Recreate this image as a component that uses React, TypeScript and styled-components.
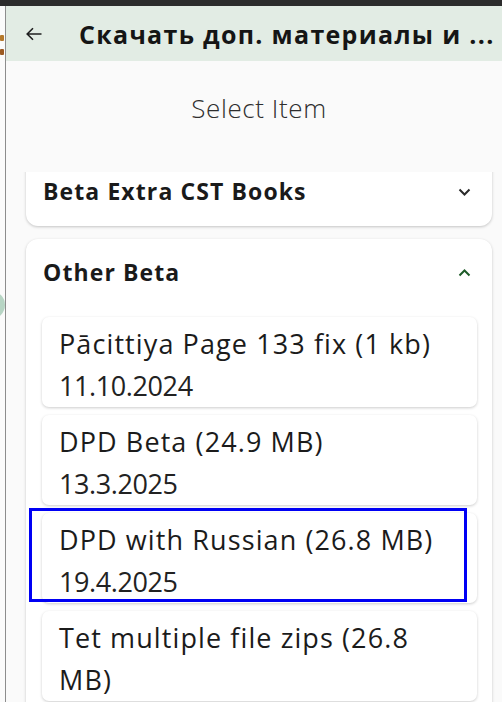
import React, { useLayoutEffect, useRef } from "react";
import styled, { createGlobalStyle } from "styled-components";

const GlobalStyle = createGlobalStyle`
  html, body {
    margin: 0;
    padding: 0;
    height: 100%;
    overflow: hidden;
    background: #fafafa;
  }
  #root { height: 100%; }
  * { box-sizing: border-box; }
`;

const FONT = `"Open Sans", "Noto Sans", sans-serif`;

const Screen = styled.div`
  height: 100vh;
  display: flex;
  flex-direction: column;
  font-family: ${FONT};
`;

const TopBar = styled.div`
  height: 6px;
  flex: none;
  background: #2c2c2c;
`;

const Desktop = styled.div`
  flex: 1;
  min-height: 0;
  display: flex;
`;

const Strip = styled.div`
  width: 6px;
  flex: none;
  background: #fbfbfb;
  border-right: 1px solid #8d8d8d;
  display: flex;
  flex-direction: column;
  overflow: hidden;
`;

const StripIcon = styled.div<{ $color: string; $top: number; $h: number }>`
  width: 4px;
  height: ${(p) => p.$h}px;
  margin-top: ${(p) => p.$top}px;
  background: ${(p) => p.$color};
  border-radius: 1px;
`;

const StripBubble = styled.div`
  width: 28px;
  height: 28px;
  flex: none;
  margin-top: 236px;
  margin-left: -23px;
  border-radius: 50%;
  background: #b7d5c4;
`;

const AppWindow = styled.div`
  flex: 1;
  min-width: 0;
  display: flex;
  flex-direction: column;
  background: #fafafa;
`;

const AppBar = styled.header`
  height: 55px;
  flex: none;
  background: #e2ece4;
  display: flex;
  align-items: center;
  padding-left: 20px;
  gap: 37px;
`;

const BackButton = styled.button`
  border: 0;
  background: transparent;
  padding: 0;
  width: 16px;
  height: 14px;
  display: flex;
  color: #1f1f1f;
`;

const Title = styled.h1`
  margin: 0;
  font-size: 25px;
  letter-spacing: 1.3px;
  font-weight: 700;
  color: #151515;
  white-space: nowrap;
  overflow: hidden;
`;

const Heading = styled.div`
  height: 111px;
  flex: none;
  display: flex;
  align-items: center;
  justify-content: center;
  padding: 0 10px 18px 20px;
  font-size: 26px;
  letter-spacing: 0.6px;
  font-weight: 300;
  color: #2e2e2e;
`;

const ScrollView = styled.div`
  flex: 1;
  min-height: 0;
  overflow-y: auto;
  scrollbar-width: none;
  padding: 0 10px 0 20px;
  &::-webkit-scrollbar { display: none; }
`;

const List = styled.div`
  display: flex;
  flex-direction: column;
  gap: 13px;
  padding-bottom: 24px;
`;

const Section = styled.section`
  background: #ffffff;
  border-radius: 12px;
  box-shadow: 0 1px 3px rgba(0, 0, 0, 0.22);
`;

const SectionHeader = styled.div`
  height: 68px;
  display: flex;
  align-items: center;
  justify-content: space-between;
  padding: 0 21px 3px 17px;
`;

const SectionTitle = styled.div`
  font-size: 23px;
  letter-spacing: 1.1px;
  font-weight: 700;
  color: #1a1a1a;
`;

const Chevron = styled.svg<{ $open?: boolean }>`
  width: 13px;
  height: 8px;
  margin-top: 3px;
  color: ${(p) => (p.$open ? "#1d5b28" : "#2a2a2a")};
`;

const Items = styled.div`
  display: flex;
  flex-direction: column;
  gap: 8px;
  padding: 10px 15px 16px 16px;
`;

const ItemCard = styled.div`
  position: relative;
  background: #ffffff;
  border-radius: 7px;
  box-shadow: 0 1px 3px rgba(0, 0, 0, 0.2);
  padding: 6px 17px 0;
  font-size: 27px;
  line-height: 42px;
  color: #1b1b1b;
`;

const ItemTitle = styled.div`
  letter-spacing: 1.1px;
`;

const ItemDate = styled.div`
  letter-spacing: -0.4px;
  color: #222222;
`;

const FocusRing = styled.div`
  position: absolute;
  left: -13px;
  top: -5px;
  width: 438px;
  height: 94px;
  border: 3px solid #0000f4;
  pointer-events: none;
`;

const ChevronIcon = ({ open }: { open?: boolean }) => (
  <Chevron $open={open} viewBox="0 0 13 8">
    <polyline
      points={open ? "1.5,6.5 6.5,1.5 11.5,6.5" : "1.5,1.5 6.5,6.5 11.5,1.5"}
      fill="none"
      stroke="currentColor"
      strokeWidth="2"
    />
  </Chevron>
);

type Item = { title: string; date?: string; focused?: boolean };

const items: Item[] = [
  { title: "Pācittiya Page 133 fix (1 kb)", date: "11.10.2024" },
  { title: "DPD Beta (24.9 MB)", date: "13.3.2025" },
  { title: "DPD with Russian (26.8 MB)", date: "19.4.2025", focused: true },
  { title: "Tet multiple file zips (26.8 MB)" },
];

export default function App() {
  const scrollRef = useRef<HTMLDivElement>(null);
  useLayoutEffect(() => {
    if (scrollRef.current) scrollRef.current.scrollTop = 14;
  }, []);

  return (
    <>
      <GlobalStyle />
      <Screen>
        <TopBar />
        <Desktop>
          <Strip>
            <StripIcon $color="#b5792c" $top={29} $h={6} />
            <StripIcon $color="#9c5a22" $top={8} $h={6} />
            <StripBubble />
          </Strip>
          <AppWindow>
            <AppBar>
              <BackButton aria-label="back">
                <svg width="16" height="14" viewBox="0 0 16 14">
                  <path
                    d="M15.5 7H1.2M7 1.2L1.2 7L7 12.8"
                    fill="none"
                    stroke="currentColor"
                    strokeWidth="1.6"
                  />
                </svg>
              </BackButton>
              <Title>Скачать доп. материалы и ...</Title>
            </AppBar>
            <Heading>Select Item</Heading>
            <ScrollView ref={scrollRef}>
              <List>
                <Section>
                  <SectionHeader>
                    <SectionTitle>Beta Extra CST Books</SectionTitle>
                    <ChevronIcon />
                  </SectionHeader>
                </Section>
                <Section>
                  <SectionHeader>
                    <SectionTitle>Other Beta</SectionTitle>
                    <ChevronIcon open />
                  </SectionHeader>
                  <Items>
                    {items.map((it) => (
                      <ItemCard key={it.title}>
                        <ItemTitle>{it.title}</ItemTitle>
                        {it.date && <ItemDate>{it.date}</ItemDate>}
                        {it.focused && <FocusRing />}
                      </ItemCard>
                    ))}
                  </Items>
                </Section>
              </List>
            </ScrollView>
          </AppWindow>
        </Desktop>
      </Screen>
    </>
  );
}
